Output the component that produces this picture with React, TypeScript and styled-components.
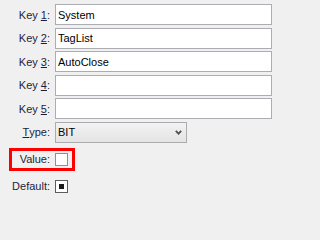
import React from "react";
import styled, { createGlobalStyle } from "styled-components";

const GlobalStyle = createGlobalStyle`
  html, body {
    margin: 0;
    padding: 0;
    background: #f0f0f0;
  }
  body {
    width: 275px;
    height: 200px;
    overflow: hidden;
    font-family: "Liberation Sans", Arial, sans-serif;
    font-size: 11px;
  }
`;

const Panel = styled.div`
  box-sizing: border-box;
  width: 275px;
  height: 200px;
  padding: 4px 3px 0 0;
  background: #f0f0f0;
`;

const FieldGrid = styled.div`
  display: grid;
  grid-template-columns: 50px 1fr;
  grid-auto-rows: 21px;
  column-gap: 5px;
  row-gap: 2.6px;
`;

const Label = styled.label`
  display: flex;
  align-items: center;
  justify-content: flex-end;
  color: #1e1e3a;
  white-space: nowrap;

  & > u {
    text-decoration: underline;
    text-underline-offset: 1px;
  }
`;

const TextInput = styled.input`
  box-sizing: border-box;
  width: 100%;
  height: 21px;
  margin: 0;
  padding: 0 2px;
  border: 1px solid #abadb3;
  background: #fff;
  color: #000;
  font-family: "Liberation Sans", Arial, sans-serif;
  font-size: 11px;
  outline: none;
`;

const Select = styled.div`
  box-sizing: border-box;
  position: relative;
  width: 132px;
  height: 21px;
  display: flex;
  align-items: center;
  padding: 0 2px;
  border: 1px solid #acacac;
  background: linear-gradient(#f2f2f2, #e4e4e4);
  color: #000;

  & > svg {
    position: absolute;
    right: 4px;
    top: 7px;
  }
`;

const CheckSection = styled.div`
  display: flex;
  flex-direction: column;
  align-items: flex-start;
  gap: 4px;
  margin-top: 5px;
  padding-left: 9px;
`;

const CheckRow = styled.div<{ $highlight?: boolean }>`
  display: flex;
  align-items: center;
  gap: 5px;
  padding: 2px 4px 2px 0;
  border: 3px solid ${({ $highlight }) => ($highlight ? "#ff0000" : "transparent")};
`;

const CheckLabel = styled.span`
  width: 38px;
  text-align: right;
  color: #1e1e3a;
  white-space: nowrap;
`;

const CheckBox = styled.span<{ $mixed?: boolean }>`
  box-sizing: border-box;
  width: 13px;
  height: 13px;
  display: flex;
  align-items: center;
  justify-content: center;
  border: 1px solid ${({ $mixed }) => ($mixed ? "#5c5c5c" : "#8e8f8f")};
  background: #fff;

  &::after {
    content: "";
    display: ${({ $mixed }) => ($mixed ? "block" : "none")};
    width: 5px;
    height: 5px;
    background: #1a1a1a;
  }
`;

const keys = ["System", "TagList", "AutoClose", "", ""];

export default function App() {
  return (
    <Panel>
      <GlobalStyle />
      <FieldGrid>
        {keys.map((value, i) => (
          <React.Fragment key={i}>
            <Label>
              Key&nbsp;<u>{i + 1}</u>:
            </Label>
            <TextInput defaultValue={value} />
          </React.Fragment>
        ))}
        <Label>
          <u>T</u>ype:
        </Label>
        <Select>
          BIT
          <svg width="7" height="5" viewBox="0 0 7 5">
            <polyline
              points="0.8,0.8 3.5,3.6 6.2,0.8"
              fill="none"
              stroke="#505050"
              strokeWidth="1.8"
            />
          </svg>
        </Select>
      </FieldGrid>
      <CheckSection>
        <CheckRow $highlight>
          <CheckLabel>Value:</CheckLabel>
          <CheckBox />
        </CheckRow>
        <CheckRow>
          <CheckLabel>Default:</CheckLabel>
          <CheckBox $mixed />
        </CheckRow>
      </CheckSection>
    </Panel>
  );
}
